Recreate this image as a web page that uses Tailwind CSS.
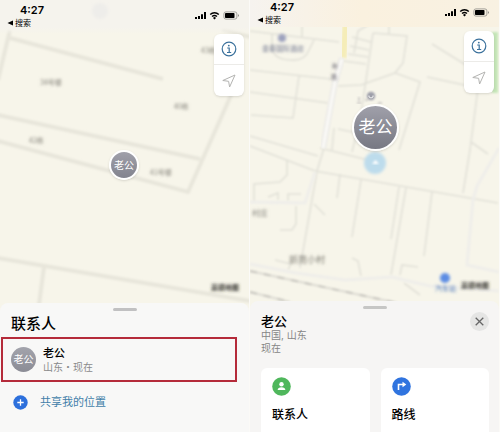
<!DOCTYPE html>
<html lang="zh-CN">
<head>
    <meta charset="UTF-8">
    <meta name="viewport" content="width=device-width, initial-scale=1.0">
    <title>查找 - 联系人</title>
    <script src="https://cdn.jsdelivr.net/npm/@tailwindcss/browser@4"></script>
</head>
<body class="bg-[#fbfaf7] font-['Inter','Noto_Sans_CJK_SC',sans-serif] text-black">
    <main class="grid min-h-screen grid-cols-2 gap-px pr-px">

        <!-- Contact list screen -->
        <section class="relative flex flex-col overflow-hidden bg-[#f7f5ea]">
            <!-- Map -->
            <svg class="absolute inset-0 h-[310px] w-full" viewBox="0 0 249 310" preserveAspectRatio="xMidYMin slice" fill="none" aria-hidden="true">
                <defs>
                    <filter id="soft"><feGaussianBlur stdDeviation="0.8" /></filter>
                    <filter id="softer" x="-20%" y="-20%" width="140%" height="140%"><feGaussianBlur stdDeviation="1.5" /></filter>
                    <linearGradient id="fadeLeft" x1="0" y1="0" x2="0" y2="1">
                        <stop offset="0.8" stop-color="#f5f3ed" />
                        <stop offset="1" stop-color="#f5f3ed" stop-opacity="0" />
                    </linearGradient>
                </defs>
                <g stroke="#e8e6db" stroke-width="4" filter="url(#soft)">
                    <path d="M10 38L163 79" />
                    <path d="M10 30L-2 80" />
                    <path d="M-2 115L200 159" />
                    <path d="M-2 141L188 192L236 84" />
                    <path d="M-2 258L250 301" />
                    <path d="M44 267L38 312" />
                    <path d="M222 29L250 37" />
                </g>
                <rect width="249" height="34" fill="url(#fadeLeft)" />
                <circle cx="100" cy="11" r="8" fill="#eeedea" filter="url(#softer)" />
                <g class="font-['Noto_Sans_CJK_SC',sans-serif]" font-size="7" fill="#85837b" filter="url(#softer)">
                    <text x="40" y="85">34号楼</text>
                    <text x="174" y="109">40栋</text>
                    <text x="29" y="143">42栋</text>
                    <text x="201" y="53">43栋</text>
                    <text x="150" y="175">41号楼</text>
                </g>
                <text class="font-['Noto_Sans_CJK_SC',sans-serif] font-bold" x="211" y="290" font-size="7" fill="#33322e" filter="url(#softer)">高德地图</text>
            </svg>

            <header class="relative flex items-start justify-between pt-1 pr-[10px]">
                <div class="pl-[7px]">
                    <div class="pl-[13px] text-[11px] leading-[13px] font-semibold">4:27</div>
                    <button class="flex items-center gap-0.5 text-[8px] leading-3">
                        <svg class="size-[6px]" viewBox="0 0 6 6" aria-hidden="true"><path d="M6 0.5V5.5L0.5 3Z" fill="#000" /></svg>搜索
                    </button>
                </div>
                <svg class="mt-[7px] h-[9px] w-[45px]" viewBox="0 0 45 9" aria-hidden="true">
                    <path d="M1 6h2v2H1zM4 5h2v3H4zM7 3.2h2V8H7zM10 1h2v7h-2z" />
                    <path d="M16.2 3.5a6.2 6.2 0 0 1 8.6 0" fill="none" stroke="#000" stroke-width="1.4" />
                    <path d="M18 5.6a3.8 3.8 0 0 1 5 0" fill="none" stroke="#000" stroke-width="1.3" />
                    <path d="M19 6.9a2 2 0 0 1 3 0L20.5 8.5z" />
                    <rect x="29.9" y="0.9" width="13" height="7.2" rx="2" fill="none" stroke="#8d8c87" stroke-width="0.8" />
                    <rect x="31" y="2" width="9.5" height="5" rx="0.8" />
                    <path d="M44 3.2v2.6q1-.3 1-1.3t-1-1.3z" fill="#8d8c87" />
                </svg>
            </header>

            <div class="relative flex-1">
                <div class="mt-[5px] mr-[5px] ml-auto w-[30px] divide-y divide-[#ecebe8] rounded-md bg-white shadow-sm">
                    <button class="flex h-[31px] w-full items-center justify-center" aria-label="信息">
                        <svg class="size-4" viewBox="0 0 16 16" fill="none" stroke="#3b719c">
                            <circle cx="8" cy="8" r="6.8" stroke-width="1.2" />
                            <circle cx="7.8" cy="4.6" r="0.9" fill="#3b719c" stroke="none" />
                            <path d="M6.2 7h2v4.4M6 11.5h4.2" stroke-width="1.2" />
                        </svg>
                    </button>
                    <button class="flex h-[31px] w-full items-center justify-center" aria-label="定位">
                        <svg class="size-4" viewBox="0 0 16 16" fill="none" stroke="#b3b3b1" stroke-linejoin="round">
                            <path d="M14 2L1.8 7.5L7.6 8.3L8.6 14Z" />
                        </svg>
                    </button>
                </div>
            </div>
            <div class="absolute top-[150px] left-[109px] flex size-[30px] items-center justify-center rounded-full border-2 border-white bg-linear-to-b from-[#a0a0aa] to-[#82838e] text-[10px] text-white shadow">老公</div>

            <div class="relative rounded-t-lg bg-[#f8f8f7] pt-[5px] pb-[22px]">
                <div class="mx-auto h-[3px] w-6 rounded-full bg-[#c1c1c2]"></div>
                <h1 class="mt-[3px] pl-[11px] text-[15px] leading-5 font-medium">联系人</h1>
                <a href="#" class="mt-[3px] mr-3 ml-px flex h-[45px] items-center gap-[7px] border-2 border-[#b52b3a] pl-2">
                    <span class="flex size-[25px] items-center justify-center rounded-full bg-linear-to-b from-[#a3a4ac] to-[#8b8c95] text-[10px] text-white">老公</span>
                    <span>
                        <span class="block text-[11px] leading-[14px] font-medium">老公</span>
                        <span class="block text-[10px] leading-[14px] text-[#8a8a8b]">山东・现在</span>
                    </span>
                </a>
                <button class="mt-3 flex items-center gap-3 pl-[13px] text-[11px] leading-4 text-[#427fa9]">
                    <svg class="size-[15px]" viewBox="0 0 15 15" aria-hidden="true">
                        <circle cx="7.5" cy="7.5" r="7.2" fill="#2d70dc" />
                        <path d="M7.5 4.3v6.4M4.3 7.5h6.4" stroke="#fff" stroke-width="1.3" />
                    </svg>
                    共享我的位置
                </button>
            </div>
        </section>

        <!-- Contact detail screen -->
        <section class="relative flex flex-col overflow-hidden bg-[#f7f5ea]">
            <!-- Map -->
            <svg class="absolute inset-0 h-[306px] w-full" viewBox="250 0 249 306" preserveAspectRatio="xMidYMin slice" fill="none" aria-hidden="true">
                <defs>
                    <linearGradient id="fadeRight" x1="0" y1="0" x2="1" y2="0">
                        <stop offset="0" stop-color="#f6f3ef" />
                        <stop offset="0.45" stop-color="#faf1df" />
                        <stop offset="1" stop-color="#f8f1e2" />
                    </linearGradient>
                </defs>
                <path d="M498 32V93H492V32Z" fill="#c5e6b8" filter="url(#soft)" />
                <g stroke="#e2e1d8" stroke-width="1.6" filter="url(#soft)">
                    <path d="M250 31L339 42M272 33V50Q276 60 291 60Q305 61 309 50L314 40M302 26V37" />
                    <path d="M250 70L331 79M299 76L293 118L251 115M250 92L328 103M250 136L318 156" />
                    <path d="M373 33L407 36L403 63L395 73L420 82L399 150M373 33L360 120L352 152M395 73L361 85L338 86" />
                    <path d="M352 37L371 42M350 46L369 50M348 54L368 57M343 61L366 64M368 25L358 31L354 53M389 25V34" />
                    <path d="M432 44L466 65M427 77L478 88L470 150L463 193M471 142L488 154" />
                    <path d="M250 146L315 171L498 203M324 148L317 171L300 268M334 128L332 150M320 148L372 161M338 129L362 134" />
                    <path d="M287 160V175L280 182L254 184V202M268 197L278 193V200M288 201V194H301M296 206V224L292 230H280" />
                    <path d="M314 204L325 215M361 180L352 237M399 187L391 239M406 188L391 275M432 192L424 256M340 174L337 198" />
                    <path d="M275 260L291 264L288 270M352 258L358 261L361 276M400 275L402 265L418 267M404 283L420 295" />
                </g>
                <g stroke="#efeeea" stroke-width="3" filter="url(#soft)">
                    <path d="M250 202L305 203L315 172" />
                    <path d="M499 148L477 186L473 200L467 265L499 272" />
                    <path d="M250 264L296 273L345 280L392 277L430 286L499 291" />
                </g>
                <path d="M346 25L343 58" stroke="#f5edb8" stroke-width="7" filter="url(#soft)" />
                <path d="M342 58L335 82L323 148" stroke="#ebeae7" stroke-width="6" filter="url(#soft)" />
                <path d="M342 59L335 82L323 148" stroke="#fbfaf7" stroke-width="3" filter="url(#soft)" />
                <g stroke="#dddbd3" stroke-width="2" filter="url(#soft)">
                    <path d="M250 271L397 303" />
                    <path d="M250 292L290 302" />
                    <path d="M250 271L397 303M250 292L290 302" stroke="#c9c7c0" stroke-dasharray="7 7" />
                </g>
                <rect x="250" width="249" height="27" fill="url(#fadeRight)" />
                <g class="font-['Noto_Sans_CJK_SC',sans-serif]" filter="url(#softer)">
                    <circle cx="282" cy="38" r="4" fill="#9ca1bd" />
                    <text x="262" y="51" font-size="7" fill="#70768f">金泰国际酒店</text>
                    <text x="332" y="68" font-size="6" fill="#5f5c68">新</text>
                    <text x="331" y="79" font-size="6" fill="#5f5c68">路</text>
                    <text x="252" y="216" font-size="8" fill="#7c7b74">村庄</text>
                    <text x="289" y="263" font-size="9" fill="#7c7a71">新苑小村</text>
                    <circle cx="445" cy="278" r="5" fill="#5c8ce4" />
                    <text x="435" y="291" font-size="7" fill="#4a75b8">汽车站</text>
                    <text class="font-bold" x="461" y="288" font-size="7" fill="#33322e">高德地图</text>
                </g>
                <circle cx="371" cy="96" r="4.2" fill="#9d9ea9" filter="url(#soft)" />
                <path d="M369 95.5v1.5q2 2 4 0v-1.5" stroke="#f2f2f2" />
                <path d="M357 103h4M359 97v4M365 100h3M378 103h4" stroke="#aaa6a9" filter="url(#soft)" />
                <circle cx="375" cy="163" r="11" fill="#bddcec" filter="url(#softer)" />
                <path d="M375.5 160L379 164H372Z" fill="#fff" filter="url(#soft)" />
            </svg>

            <header class="relative flex items-start justify-between pt-px pr-[10px]">
                <div class="pl-[7px]">
                    <div class="pl-[13px] text-[11px] leading-[13px] font-semibold">4:27</div>
                    <button class="flex items-center gap-0.5 text-[8px] leading-3">
                        <svg class="size-[6px]" viewBox="0 0 6 6" aria-hidden="true"><path d="M6 0.5V5.5L0.5 3Z" fill="#000" /></svg>搜索
                    </button>
                </div>
                <svg class="mt-[7px] h-[9px] w-[45px]" viewBox="0 0 45 9" aria-hidden="true">
                    <path d="M1 6h2v2H1zM4 5h2v3H4zM7 3.2h2V8H7zM10 1h2v7h-2z" />
                    <path d="M16.2 3.5a6.2 6.2 0 0 1 8.6 0" fill="none" stroke="#000" stroke-width="1.4" />
                    <path d="M18 5.6a3.8 3.8 0 0 1 5 0" fill="none" stroke="#000" stroke-width="1.3" />
                    <path d="M19 6.9a2 2 0 0 1 3 0L20.5 8.5z" />
                    <rect x="29.9" y="0.9" width="13" height="7.2" rx="2" fill="none" stroke="#8d8c87" stroke-width="0.8" />
                    <rect x="31" y="2" width="9.5" height="5" rx="0.8" />
                    <path d="M44 3.2v2.6q1-.3 1-1.3t-1-1.3z" fill="#8d8c87" />
                </svg>
            </header>

            <div class="relative flex-1">
                <div class="mt-[5px] mr-[5px] ml-auto w-[30px] divide-y divide-[#ecebe8] rounded-md bg-white shadow-sm">
                    <button class="flex h-[31px] w-full items-center justify-center" aria-label="信息">
                        <svg class="size-4" viewBox="0 0 16 16" fill="none" stroke="#3b719c">
                            <circle cx="8" cy="8" r="6.8" stroke-width="1.2" />
                            <circle cx="7.8" cy="4.6" r="0.9" fill="#3b719c" stroke="none" />
                            <path d="M6.2 7h2v4.4M6 11.5h4.2" stroke-width="1.2" />
                        </svg>
                    </button>
                    <button class="flex h-[31px] w-full items-center justify-center" aria-label="定位">
                        <svg class="size-4" viewBox="0 0 16 16" fill="none" stroke="#b3b3b1" stroke-linejoin="round">
                            <path d="M14 2L1.8 7.5L7.6 8.3L8.6 14Z" />
                        </svg>
                    </button>
                </div>
            </div>
            <div class="absolute top-[104px] left-[102px] flex size-[47px] items-center justify-center rounded-full border-2 border-white bg-linear-to-b from-[#a0a0aa] to-[#777883] text-[17px] text-white shadow">老公</div>

            <div class="relative rounded-t-lg bg-[#f6f5f4] pt-[5px]">
                <div class="mx-auto h-[3px] w-6 rounded-full bg-[#c6c6c5]"></div>
                <div class="flex items-start justify-between pr-[10px] pl-[11px]">
                    <div class="pt-1">
                        <h2 class="text-[13px] leading-4 font-medium">老公</h2>
                        <p class="text-[10px] leading-[13px] text-[#858585]">中国, 山东<br>现在</p>
                    </div>
                    <button class="mt-[3px] flex size-[19px] items-center justify-center rounded-full bg-[#e5e5e4]" aria-label="关闭">
                        <svg class="size-[9px]" viewBox="0 0 9 9" stroke="#666" stroke-width="1.3"><path d="M0.7 0.7L8.3 8.3M8.3 0.7L0.7 8.3" /></svg>
                    </button>
                </div>
                <div class="mt-[13px] grid grid-cols-2 gap-[11px] pr-[10px] pl-[11px]">
                    <button class="flex flex-col items-start gap-[11px] rounded-t-md bg-white px-[11px] py-[9px] text-[12px] leading-4 font-medium">
                        <svg class="size-[19px]" viewBox="0 0 19 19" aria-hidden="true">
                            <circle cx="9.5" cy="9.5" r="9.3" fill="#4fb75c" />
                            <circle cx="9.5" cy="7.2" r="2.2" fill="#fff" />
                            <path d="M5.6 13Q6 10.3 9.5 10.3T13.4 13Z" fill="#fff" />
                        </svg>
                        联系人
                    </button>
                    <button class="flex flex-col items-start gap-[11px] rounded-t-md bg-white px-[11px] py-[9px] text-[12px] leading-4 font-medium">
                        <svg class="size-[19px]" viewBox="0 0 19 19" aria-hidden="true">
                            <circle cx="9.5" cy="9.5" r="9.3" fill="#3074df" />
                            <path d="M6.5 13V7.5H11" fill="none" stroke="#fff" stroke-width="1.6" />
                            <path d="M10.5 4.7L14.3 7.5L10.5 10.3Z" fill="#fff" />
                        </svg>
                        路线
                    </button>
                </div>
            </div>
        </section>
    </main>
</body>
</html>
